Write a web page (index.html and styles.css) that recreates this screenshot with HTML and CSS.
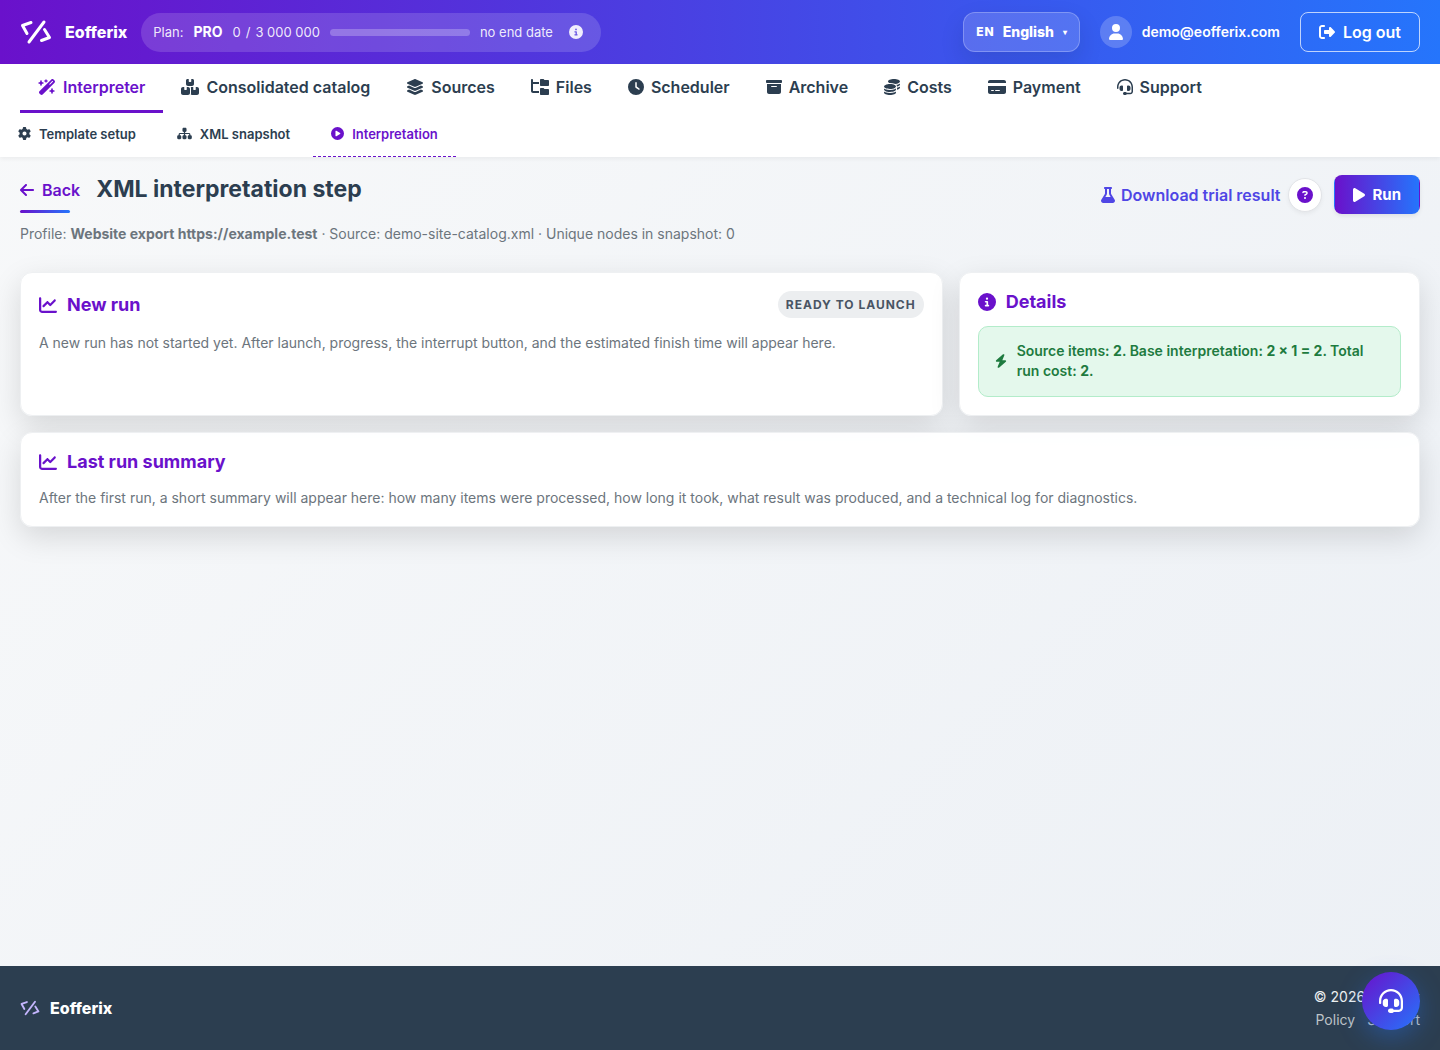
FILE: index.html
```html
<!DOCTYPE html>
<html lang="en">
<head>
	<meta charset="UTF-8">
	<meta name="viewport" content="width=device-width, initial-scale=1">
	<title>XML interpretation step - Eofferix</title>
	<link rel="stylesheet" href="styles.css">
</head>
<body>

	<!-- icons -->
	<svg class="sprite" aria-hidden="true">
		<symbol id="i-logo" viewBox="0 0 32 32"><path d="M11 6.500L2.500 9.500L7 17.500M24 6L9 26M24.500 13.500L29.500 21.500L21.500 24.500" fill="none" stroke="currentColor" stroke-width="3" stroke-linecap="round" stroke-linejoin="round"/></symbol>
		<symbol id="i-wand" viewBox="0 0 576 512"><path d="M234.7 42.7L197 56.8c-3 1.100-5 4-5 7.200s2 6.100 5 7.200l37.700 14.100L248.800 123c1.100 3 4 5 7.200 5s6.100-2 7.200-5l14.100-37.700L315 71.200c3-1.100 5-4 5-7.200s-2-6.100-5-7.200L277.300 42.700 263.200 5c-1.100-3-4-5-7.200-5s-6.100 2-7.200 5L234.700 42.700zM46.100 395.400c-18.700 18.700-18.700 49.100 0 67.900l34.600 34.600c18.700 18.700 49.100 18.700 67.900 0L529.900 116.500c18.700-18.700 18.700-49.100 0-67.900L495.300 14.100c-18.700-18.700-49.100-18.700-67.900 0L46.100 395.400zM484.600 82.600l-105 105-23.300-23.300 105-105 23.300 23.300zM7.500 117.200C3 118.900 0 123.200 0 128s3 9.100 7.500 10.800L64 160l21.200 56.500c1.700 4.500 6 7.500 10.800 7.500s9.100-3 10.800-7.500L128 160l56.500-21.200c4.500-1.700 7.500-6 7.500-10.800s-3-9.100-7.500-10.800L128 96 106.800 39.500C105.100 35 100.800 32 96 32s-9.100 3-10.800 7.500L64 96 7.500 117.200zm352 256c-4.500 1.700-7.500 6-7.500 10.800s3 9.100 7.500 10.800L416 416l21.200 56.500c1.700 4.500 6 7.500 10.800 7.500s9.100-3 10.800-7.500L480 416l56.500-21.200c4.500-1.700 7.500-6 7.500-10.800s-3-9.100-7.500-10.800L480 352l-21.200-56.500c-1.700-4.500-6-7.500-10.800-7.500s-9.100 3-10.800 7.500L416 352l-56.500 21.200z"/></symbol>
		<symbol id="i-boxes" viewBox="0 0 576 512"><path d="M248 0H208c-26.500 0-48 21.500-48 48V160c0 35.300 28.700 64 64 64H352c35.300 0 64-28.700 64-64V48c0-26.500-21.500-48-48-48H328V80c0 8.800-7.200 16-16 16H264c-8.800 0-16-7.200-16-16V0zM64 256c-35.300 0-64 28.700-64 64V448c0 35.300 28.700 64 64 64H224c35.300 0 64-28.700 64-64V320c0-35.300-28.700-64-64-64H184v80c0 8.800-7.200 16-16 16H120c-8.800 0-16-7.200-16-16V256H64zM352 512H512c35.300 0 64-28.700 64-64V320c0-35.300-28.700-64-64-64H472v80c0 8.800-7.200 16-16 16H408c-8.800 0-16-7.200-16-16V256H352c-15 0-28.800 5.100-39.700 13.800c4.900 10.400 7.700 22 7.700 34.200V464c0 12.200-2.800 23.800-7.700 34.200C323.200 506.900 337 512 352 512z"/></symbol>
		<symbol id="i-layers" viewBox="0 0 576 512"><path d="M264.5 5.200c14.900-6.900 32.100-6.900 47 0l218.600 101c8.500 3.900 13.900 12.400 13.900 21.800s-5.400 17.900-13.900 21.800l-218.600 101c-14.900 6.900-32.100 6.900-47 0L45.900 149.800C37.400 145.800 32 137.300 32 128s5.400-17.900 13.900-21.800L264.500 5.200zM476.900 209.600l53.200 24.600c8.500 3.900 13.900 12.400 13.900 21.800s-5.400 17.900-13.900 21.800l-218.600 101c-14.900 6.900-32.100 6.900-47 0L45.900 277.800C37.400 273.800 32 265.300 32 256s5.400-17.900 13.900-21.800l53.200-24.600 152 70.200c23.400 10.800 50.400 10.800 73.800 0l152-70.200zm-152 198.200l152-70.200 53.200 24.600c8.500 3.900 13.900 12.400 13.900 21.800s-5.400 17.900-13.900 21.800l-218.600 101c-14.900 6.900-32.100 6.900-47 0L45.900 405.800C37.400 401.800 32 393.300 32 384s5.400-17.900 13.900-21.800l53.200-24.600 152 70.200c23.400 10.800 50.400 10.800 73.800 0z"/></symbol>
		<symbol id="i-tree" viewBox="0 0 576 512"><path d="M64 32C64 14.300 49.700 0 32 0S0 14.300 0 32v96V384c0 35.300 28.700 64 64 64H256V384H64V160H256V96H64V32zM288 192c0 17.700 14.300 32 32 32H544c17.700 0 32-14.300 32-32V64c0-17.700-14.300-32-32-32H445.300c-8.500 0-16.600-3.400-22.600-9.400L409.400 9.400c-6-6-14.100-9.400-22.600-9.400H320c-17.700 0-32 14.300-32 32V192zm0 288c0 17.700 14.300 32 32 32H544c17.700 0 32-14.300 32-32V352c0-17.700-14.300-32-32-32H445.300c-8.500 0-16.600-3.400-22.600-9.400l-13.300-13.300c-6-6-14.100-9.400-22.600-9.400H320c-17.700 0-32 14.300-32 32V480z"/></symbol>
		<symbol id="i-clock" viewBox="0 0 512 512"><path d="M256 0a256 256 0 1 1 0 512A256 256 0 1 1 256 0zM232 120V256c0 8 4 15.500 10.700 20l96 64c11 7.400 25.900 4.400 33.300-6.700s4.400-25.900-6.700-33.300L280 243.200V120c0-13.300-10.700-24-24-24s-24 10.700-24 24z"/></symbol>
		<symbol id="i-archive" viewBox="0 0 512 512"><path d="M32 32H480c17.700 0 32 14.300 32 32V96c0 17.700-14.300 32-32 32H32C14.300 128 0 113.700 0 96V64C0 46.300 14.300 32 32 32zm0 128H480V416c0 35.300-28.700 64-64 64H96c-35.300 0-64-28.700-64-64V160zm128 80c0 8.800 7.200 16 16 16H336c8.800 0 16-7.200 16-16s-7.200-16-16-16H176c-8.800 0-16 7.200-16 16z"/></symbol>
		<symbol id="i-coins" viewBox="0 0 512 512"><path d="M512 80c0 18-14.300 34.600-38.400 48c-29.100 16.100-72.500 27.500-122.300 30.900c-3.700-1.800-7.400-3.500-11.300-5C300.600 137.400 248.200 128 192 128c-8.300 0-16.400 .2-24.500 .6l-1.100-.6C142.300 114.600 128 98 128 80c0-44.200 86-80 192-80S512 35.800 512 80zM160.700 161.100c10.200-.7 20.700-1.100 31.300-1.100c62.200 0 117.400 12.300 152.500 31.400C369.300 204.900 384 221.700 384 240c0 4-.7 7.900-2.100 11.700c-4.600 13.200-17 25.300-35 35.500c-.1 .1-.3 .1-.4 .2c-.3 .2-.6 .3-.9 .5c-35 19.400-90.800 32-153.600 32c-59.600 0-112.900-11.300-148.200-29.100c-1.900-.9-3.700-1.900-5.500-2.900C14.300 274.600 0 258 0 240c0-34.800 53.400-64.500 128-75.400c10.500-1.500 21.400-2.700 32.700-3.500zM416 240c0-21.900-10.600-39.900-24.100-53.400c28.300-4.400 54.200-11.400 76.200-20.500c16.300-6.800 31.500-15.200 43.900-25.500V176c0 19.300-16.500 37.100-43.800 50.900c-14.600 7.400-32.400 13.700-52.400 18.500c.1-1.800 .2-3.500 .2-5.300zm-32 96c0 18-14.300 34.600-38.400 48c-1.800 1-3.600 1.900-5.500 2.900C304.900 404.700 251.600 416 192 416c-62.800 0-118.600-12.600-153.600-32C14.300 370.600 0 354 0 336V300.600c12.500 10.300 27.600 18.700 43.900 25.500C83.400 342.600 135.800 352 192 352s108.600-9.400 148.100-25.900c7.800-3.200 15.300-6.900 22.400-10.900c6.100-3.400 11.800-7.200 17.200-11.200c1.500-1.100 2.900-2.300 4.300-3.400V336zm32 0V278.100c19-4.200 36.500-9.500 52.100-16c16.300-6.800 31.500-15.200 43.900-25.500V272c0 10.500-5 21-14.900 30.900c-16.300 16.300-45 29.700-81.300 38.400c.1-1.700 .2-3.500 .2-5.300zM192 448c56.200 0 108.600-9.400 148.100-25.900c16.300-6.800 31.500-15.200 43.900-25.500V432c0 44.200-86 80-192 80S0 476.200 0 432V396.600c12.500 10.300 27.600 18.700 43.900 25.500C83.400 438.600 135.800 448 192 448z"/></symbol>
		<symbol id="i-card" viewBox="0 0 576 512"><path d="M64 32C28.700 32 0 60.700 0 96v32H576V96c0-35.300-28.700-64-64-64H64zM576 224H0V416c0 35.300 28.700 64 64 64H512c35.300 0 64-28.700 64-64V224zM112 352h64c8.800 0 16 7.200 16 16s-7.200 16-16 16H112c-8.800 0-16-7.200-16-16s7.200-16 16-16zm112 16c0-8.800 7.200-16 16-16H368c8.800 0 16 7.200 16 16s-7.200 16-16 16H240c-8.800 0-16-7.200-16-16z"/></symbol>
		<symbol id="i-headset" viewBox="0 0 512 512"><path d="M256 48C141.100 48 48 141.100 48 256v40c0 13.300-10.700 24-24 24s-24-10.700-24-24V256C0 114.600 114.600 0 256 0S512 114.600 512 256V400.100c0 48.600-39.400 88-88.100 88L313.600 488c-8.300 14.300-23.800 24-41.600 24H240c-26.500 0-48-21.500-48-48s21.500-48 48-48h32c17.800 0 33.300 9.700 41.600 24l110.400 .1c22.100 0 40-17.900 40-40V256c0-114.900-93.100-208-208-208zM144 208h16c17.700 0 32 14.300 32 32V352c0 17.700-14.300 32-32 32H144c-35.300 0-64-28.700-64-64V272c0-35.300 28.700-64 64-64zm224 0c35.300 0 64 28.700 64 64v48c0 35.300-28.700 64-64 64H352c-17.700 0-32-14.300-32-32V240c0-17.700 14.300-32 32-32h16z"/></symbol>
		<symbol id="i-gear" viewBox="0 0 512 512"><path d="M495.900 166.600c3.200 8.700 .5 18.400-6.400 24.600l-43.300 39.400c1.100 8.300 1.700 16.800 1.700 25.400s-.6 17.100-1.700 25.400l43.300 39.400c6.900 6.200 9.600 15.900 6.400 24.600c-4.400 11.900-9.700 23.300-15.800 34.300l-4.700 8.100c-6.600 11-14 21.400-22.100 31.200c-5.900 7.200-15.700 9.600-24.500 6.800l-55.700-17.700c-13.400 10.300-28.200 18.900-44 25.400l-12.500 57.100c-2 9.100-9 16.300-18.200 17.800c-13.800 2.300-28 3.500-42.500 3.500s-28.700-1.200-42.500-3.500c-9.200-1.500-16.200-8.700-18.200-17.800l-12.500-57.100c-15.800-6.500-30.600-15.100-44-25.400L83.100 425.900c-8.800 2.800-18.600 .3-24.500-6.800c-8.100-9.800-15.500-20.200-22.100-31.200l-4.700-8.100c-6.100-11-11.400-22.400-15.800-34.300c-3.200-8.700-.5-18.400 6.400-24.600l43.300-39.400C64.600 273.100 64 264.600 64 256s.6-17.100 1.700-25.400L22.400 191.200c-6.900-6.200-9.600-15.900-6.400-24.600c4.400-11.900 9.700-23.300 15.800-34.300l4.700-8.100c6.600-11 14-21.400 22.100-31.200c5.900-7.200 15.700-9.600 24.500-6.800l55.700 17.700c13.400-10.300 28.200-18.900 44-25.400l12.500-57.100c2-9.100 9-16.300 18.200-17.800C227.300 1.200 241.500 0 256 0s28.700 1.200 42.500 3.500c9.200 1.500 16.200 8.700 18.200 17.800l12.500 57.100c15.800 6.500 30.600 15.100 44 25.400l55.700-17.700c8.800-2.800 18.600-.3 24.500 6.800c8.100 9.800 15.500 20.200 22.100 31.200l4.700 8.100c6.100 11 11.400 22.400 15.800 34.300zM256 336a80 80 0 1 0 0-160 80 80 0 1 0 0 160z"/></symbol>
		<symbol id="i-sitemap" viewBox="0 0 576 512"><path d="M208 80c0-26.500 21.500-48 48-48h64c26.500 0 48 21.500 48 48v64c0 26.500-21.500 48-48 48h-8v40H464c30.900 0 56 25.100 56 56v32h8c26.500 0 48 21.500 48 48v64c0 26.500-21.500 48-48 48H464c-26.500 0-48-21.500-48-48V368c0-26.500 21.500-48 48-48h8V288c0-4.400-3.600-8-8-8H312v40h8c26.500 0 48 21.500 48 48v64c0 26.500-21.500 48-48 48H256c-26.500 0-48-21.500-48-48V368c0-26.500 21.500-48 48-48h8V280H112c-4.400 0-8 3.600-8 8v32h8c26.500 0 48 21.500 48 48v64c0 26.500-21.500 48-48 48H48c-26.500 0-48-21.500-48-48V368c0-26.500 21.500-48 48-48h8V288c0-30.900 25.100-56 56-56H264V192h-8c-26.500 0-48-21.500-48-48V80z"/></symbol>
		<symbol id="i-circle-play" viewBox="0 0 512 512"><path d="M0 256a256 256 0 1 1 512 0A256 256 0 1 1 0 256zM188.300 147.100c-7.600 4.200-12.300 12.300-12.300 20.900V344c0 8.700 4.700 16.700 12.300 20.900s16.800 4.100 24.300-.5l144-88c7.100-4.400 11.500-12.100 11.500-20.500s-4.400-16.100-11.500-20.500l-144-88c-7.400-4.500-16.700-4.700-24.300-.5z"/></symbol>
		<symbol id="i-back" viewBox="0 0 448 512"><path d="M9.400 233.400c-12.500 12.500-12.500 32.800 0 45.300l160 160c12.500 12.500 32.800 12.500 45.300 0s12.500-32.800 0-45.300L109.200 288 416 288c17.700 0 32-14.300 32-32s-14.300-32-32-32l-306.700 0L214.600 118.600c12.500-12.500 12.500-32.800 0-45.300s-32.800-12.500-45.300 0l-160 160z"/></symbol>
		<symbol id="i-chart" viewBox="0 0 512 512"><path d="M64 64c0-17.700-14.300-32-32-32S0 46.300 0 64V400c0 44.200 35.800 80 80 80H480c17.700 0 32-14.300 32-32s-14.300-32-32-32H80c-8.800 0-16-7.200-16-16V64zm406.600 86.600c12.500-12.500 12.500-32.800 0-45.300s-32.800-12.500-45.300 0L320 210.700l-57.400-57.400c-12.500-12.500-32.800-12.500-45.300 0l-112 112c-12.500 12.500-12.500 32.800 0 45.300s32.800 12.500 45.300 0L240 221.300l57.400 57.400c12.500 12.500 32.800 12.500 45.300 0l128-128z"/></symbol>
		<symbol id="i-info" viewBox="0 0 512 512"><path d="M256 512A256 256 0 1 0 256 0a256 256 0 1 0 0 512zM216 336h24V272H216c-13.300 0-24-10.700-24-24s10.700-24 24-24h48c13.300 0 24 10.700 24 24v88h8c13.300 0 24 10.700 24 24s-10.700 24-24 24H216c-13.300 0-24-10.700-24-24s10.700-24 24-24zm40-208a32 32 0 1 1 0 64 32 32 0 1 1 0-64z"/></symbol>
		<symbol id="i-question" viewBox="0 0 512 512"><path d="M256 512A256 256 0 1 0 256 0a256 256 0 1 0 0 512zM169.800 165.300c7.900-22.300 29.100-37.300 52.800-37.300h58.300c34.900 0 63.100 28.300 63.100 63.100c0 22.600-12.100 43.500-31.700 54.800L280 264.400c-.2 13-10.900 23.600-24 23.600c-13.300 0-24-10.700-24-24V250.500c0-8.600 4.600-16.500 12.100-20.800l44.300-25.400c4.700-2.700 7.600-7.700 7.600-13.100c0-8.400-6.800-15.100-15.100-15.100H222.600c-3.400 0-6.400 2.100-7.500 5.300l-.4 1.200c-4.400 12.500-18.200 19-30.600 14.600s-19-18.200-14.600-30.600l.4-1.200zM224 352a32 32 0 1 1 64 0 32 32 0 1 1 -64 0z"/></symbol>
		<symbol id="i-flask" viewBox="0 0 448 512"><path d="M288 0H128C110.300 0 96 14.300 96 32s14.300 32 32 32V196.800c0 11.800-3.300 23.500-9.500 33.500L10.300 406.200C3.600 417.200 0 429.700 0 442.600C0 480.900 31.100 512 69.400 512H378.600c38.300 0 69.400-31.100 69.400-69.400c0-12.800-3.600-25.400-10.300-36.400L329.500 230.400c-6.200-10.100-9.500-21.700-9.500-33.500V64c17.700 0 32-14.300 32-32s-14.300-32-32-32H288zM192 196.800V64h64V196.800c0 23.700 6.600 46.900 19 67.100L309.500 320h-171L173 263.900c12.400-20.200 19-43.400 19-67.100z"/></symbol>
		<symbol id="i-play" viewBox="0 0 384 512"><path d="M73 39c-14.800-9.100-33.400-9.400-48.500-.9S0 62.600 0 80V432c0 17.400 9.400 33.400 24.500 41.900s33.700 8.100 48.500-.9L361 297c14.300-8.700 23-24.200 23-41s-8.700-32.200-23-41L73 39z"/></symbol>
		<symbol id="i-bolt" viewBox="0 0 448 512"><path d="M349.400 44.600c5.900-13.700 1.500-29.700-10.600-38.500s-28.600-8-39.900 1.800l-256 224c-10 8.800-13.600 22.900-8.900 35.300S50.700 288 64 288H175.500L98.600 467.400c-5.900 13.700-1.500 29.700 10.600 38.500s28.600 8 39.900-1.800l256-224c10-8.800 13.600-22.900 8.900-35.300s-16.600-20.700-30-20.700H272.500L349.400 44.600z"/></symbol>
		<symbol id="i-user" viewBox="0 0 448 512"><path d="M224 256A128 128 0 1 0 224 0a128 128 0 1 0 0 256zm-45.700 48C79.800 304 0 383.800 0 482.300C0 498.700 13.300 512 29.700 512H418.300c16.400 0 29.700-13.300 29.700-29.700C448 383.800 368.200 304 269.700 304H178.300z"/></symbol>
		<symbol id="i-logout" viewBox="0 0 512 512"><path d="M377.900 105.900L500.700 228.700c7.200 7.200 11.300 17.100 11.300 27.300s-4.100 20.100-11.300 27.300L377.900 406.100c-6.400 6.400-15 9.900-24 9.900c-18.700 0-33.900-15.200-33.900-33.900l0-62.100-128 0c-17.700 0-32-14.300-32-32l0-64c0-17.700 14.300-32 32-32l128 0 0-62.100c0-18.700 15.200-33.900 33.900-33.900c9 0 17.600 3.600 24 9.900zM160 96L96 96c-17.700 0-32 14.300-32 32l0 256c0 17.700 14.300 32 32 32l64 0c17.700 0 32 14.300 32 32s-14.300 32-32 32l-64 0c-53 0-96-43-96-96L0 128C0 75 43 32 96 32l64 0c17.700 0 32 14.300 32 32s-14.300 32-32 32z"/></symbol>
	</svg>

	<header class="topbar">
		<a class="brand" href="#">
			<svg class="brand-logo"><use href="#i-logo"/></svg>
			Eofferix
		</a>
		<div class="plan">
			<span>Plan:</span>
			<strong>PRO</strong>
			<span class="plan-usage">0<span class="slash">/</span>3 000 000</span>
			<progress class="plan-bar" value="0" max="3000000" aria-label="Plan usage"></progress>
			<span>no end date</span>
			<button class="plan-info" type="button" aria-label="Plan details"><svg class="icon"><use href="#i-info"/></svg></button>
		</div>
		<div class="topbar-right">
			<label class="lang">
				<span class="lang-code">EN</span>
				<select class="lang-select" aria-label="Language">
					<option>English</option>
				</select>
				<span class="lang-caret">▾</span>
			</label>
			<div class="user">
				<span class="avatar"><svg class="icon"><use href="#i-user"/></svg></span>
				<span>demo@eofferix.com</span>
			</div>
			<button class="logout" type="button"><svg class="icon"><use href="#i-logout"/></svg>Log out</button>
		</div>
	</header>

	<div class="menus">
		<nav class="nav" aria-label="Main">
			<a class="nav-item active" href="#"><svg class="icon icon-wide"><use href="#i-wand"/></svg>Interpreter</a>
			<a class="nav-item" href="#"><svg class="icon icon-wide"><use href="#i-boxes"/></svg>Consolidated catalog</a>
			<a class="nav-item" href="#"><svg class="icon icon-wide"><use href="#i-layers"/></svg>Sources</a>
			<a class="nav-item" href="#"><svg class="icon icon-wide"><use href="#i-tree"/></svg>Files</a>
			<a class="nav-item" href="#"><svg class="icon"><use href="#i-clock"/></svg>Scheduler</a>
			<a class="nav-item" href="#"><svg class="icon"><use href="#i-archive"/></svg>Archive</a>
			<a class="nav-item" href="#"><svg class="icon"><use href="#i-coins"/></svg>Costs</a>
			<a class="nav-item" href="#"><svg class="icon icon-wide"><use href="#i-card"/></svg>Payment</a>
			<a class="nav-item" href="#"><svg class="icon"><use href="#i-headset"/></svg>Support</a>
		</nav>
		<nav class="subnav" aria-label="Interpreter">
			<a class="subnav-item" href="#"><svg class="icon"><use href="#i-gear"/></svg>Template setup</a>
			<a class="subnav-item" href="#"><svg class="icon icon-wide"><use href="#i-sitemap"/></svg>XML snapshot</a>
			<a class="subnav-item active" href="#"><svg class="icon"><use href="#i-circle-play"/></svg>Interpretation</a>
		</nav>
	</div>

	<main class="page">
		<div class="page-head">
			<div class="page-title">
				<div class="title-row">
					<a class="back" href="#"><svg class="icon"><use href="#i-back"/></svg>Back</a>
					<h1>XML interpretation step</h1>
				</div>
				<p class="page-sub">Profile: <strong>Website export https://example.test</strong> · Source: demo-site-catalog.xml · Unique nodes in snapshot: 0</p>
			</div>
			<div class="page-actions">
				<a class="trial" href="#"><svg class="icon"><use href="#i-flask"/></svg>Download trial result</a>
				<button class="help" type="button" aria-label="Help"><svg class="icon"><use href="#i-question"/></svg></button>
				<button class="run" type="button"><svg class="icon"><use href="#i-play"/></svg>Run</button>
			</div>
		</div>

		<div class="cards">
			<section class="card">
				<div class="card-head">
					<h2><svg class="icon"><use href="#i-chart"/></svg>New run</h2>
					<span class="badge">Ready to launch</span>
				</div>
				<p>A new run has not started yet. After launch, progress, the interrupt button, and the estimated finish time will appear here.</p>
			</section>
			<section class="card">
				<h2><svg class="icon"><use href="#i-info"/></svg>Details</h2>
				<div class="notice">
					<svg class="icon"><use href="#i-bolt"/></svg>
					<div>Source items: <strong>2</strong>. Base interpretation: <strong>2 × 1 = 2</strong>. Total run cost: <strong>2</strong>.</div>
				</div>
			</section>
			<section class="card card-wide">
				<h2><svg class="icon"><use href="#i-chart"/></svg>Last run summary</h2>
				<p>After the first run, a short summary will appear here: how many items were processed, how long it took, what result was produced, and a technical log for diagnostics.</p>
			</section>
		</div>
	</main>

	<footer class="footer">
		<a class="footer-brand" href="#">
			<svg class="footer-logo"><use href="#i-logo"/></svg>
			Eofferix
		</a>
		<div class="footer-info">
			<span>© 2026 Eofferix</span>
			<div class="footer-links">
				<a href="#">Policy</a>
				<a href="#">Support</a>
			</div>
		</div>
	</footer>

	<button class="chat-button" type="button" aria-label="Support chat"><svg class="icon"><use href="#i-headset"/></svg></button>

</body>
</html>
```

FILE: styles.css
```css
:root{
	--purple: #6a11cb;
	--blue: #2575fc;
	--dark: #2c3e50;
	--muted: #6c757d;
	--gradient: linear-gradient(90deg, #6a11cb 0%, #2575fc 100%);
}
*{
	box-sizing: border-box;
	margin: 0;
	padding: 0;
}
body{
	display: flex;
	flex-direction: column;
	min-height: 100vh;
	font-family: Inter, "Liberation Sans", sans-serif;
	font-size: 14px;
	line-height: 20px;
	color: var(--dark);
	background: linear-gradient(135deg, #f8f9fa 0%, #ecf0f5 100%);
}
a{
	color: inherit;
	text-decoration: none;
}
button, select{
	font: inherit;
	color: inherit;
	background: none;
	border: 0;
	cursor: pointer;
}
.sprite{
	position: absolute;
	width: 0;
	height: 0;
}
.icon{
	width: 16px;
	height: 16px;
	flex: none;
	fill: currentColor;
}

/* top bar */
.topbar{
	display: flex;
	align-items: center;
	gap: 14px;
	height: 64px;
	padding: 0 20px;
	color: #fff;
	background: var(--gradient);
}
.brand{
	display: flex;
	align-items: center;
	gap: 13px;
	font-size: 16px;
	font-weight: 800;
}
.brand-logo{
	width: 32px;
	height: 32px;
}
.plan{
	display: flex;
	align-items: center;
	gap: 10px;
	height: 39px;
	padding: 0 18px 0 12px;
	border-radius: 20px;
	background: rgba(255, 255, 255, 0.15);
	font-size: 13px;
	color: rgba(255, 255, 255, 0.9);
}
.plan strong{
	font-size: 14px;
	color: #fff;
}
.slash{
	margin: 0 5px;
}
.plan-bar{
	appearance: none;
	width: 140px;
	height: 7px;
	border: 0;
	border-radius: 4px;
	overflow: hidden;
	background: rgba(255, 255, 255, 0.25);
}
.plan-bar::-webkit-progress-bar{
	background: transparent;
}
.plan-bar::-webkit-progress-value{
	background: #fff;
}
.plan-info{
	display: flex;
	margin-left: 6px;
}
.plan-info .icon{
	width: 14px;
	height: 14px;
}
.topbar-right{
	display: flex;
	align-items: center;
	gap: 20px;
	margin-left: auto;
}
.lang{
	display: flex;
	align-items: center;
	gap: 8px;
	height: 40px;
	padding: 0 12px;
	border: 1px solid rgba(255, 255, 255, 0.25);
	border-radius: 12px;
	background: rgba(255, 255, 255, 0.15);
	box-shadow: 0 10px 24px rgba(15, 23, 42, 0.12);
	font-weight: 800;
}
.lang-code{
	font-size: 12px;
	letter-spacing: 1px;
}
.lang-select{
	appearance: none;
	outline: 0;
}
.lang-select option{
	color: var(--dark);
}
.lang-caret{
	font-size: 8px;
}
.user{
	display: flex;
	align-items: center;
	gap: 10px;
	font-weight: 600;
}
.avatar{
	display: flex;
	align-items: center;
	justify-content: center;
	width: 32px;
	height: 32px;
	border-radius: 50%;
	background: rgba(255, 255, 255, 0.2);
}
.logout{
	display: flex;
	align-items: center;
	gap: 8px;
	height: 40px;
	padding: 0 18px;
	border: 1px solid rgba(255, 255, 255, 0.7);
	border-radius: 8px;
	font-size: 16px;
	font-weight: 600;
}

/* menus */
.menus{
	background: #fff;
	box-shadow: 0 2px 4px rgba(0, 0, 0, 0.05);
}
.nav{
	display: flex;
	padding: 0 20px;
}
.nav-item{
	display: flex;
	align-items: center;
	gap: 7px;
	height: 49px;
	padding: 0 18px;
	border-bottom: 3px solid transparent;
	font-size: 16px;
	font-weight: 600;
}
.nav-item.active{
	color: var(--purple);
	border-color: var(--purple);
}
.nav .icon-wide{
	width: 18px;
}
.subnav{
	display: flex;
	gap: 5px;
}
.subnav-item{
	display: flex;
	align-items: center;
	gap: 8px;
	height: 44px;
	padding: 0 18px 2px;
	border-bottom: 1px dashed transparent;
	font-size: 13px;
	font-weight: 600;
}
.subnav-item.active{
	color: var(--purple);
	border-color: var(--purple);
}
.subnav .icon{
	width: 13px;
	height: 13px;
}
.subnav .icon-wide{
	width: 15px;
}

/* page */
.page{
	flex: 1;
	padding: 18px 20px 24px;
}
.page-head{
	display: flex;
	justify-content: space-between;
	align-items: flex-start;
	margin-bottom: 28px;
}
.title-row{
	display: flex;
	align-items: center;
	gap: 16px;
	position: relative;
	padding-bottom: 9px;
	height: 38px;
}
.title-row::after{
	content: "";
	position: absolute;
	left: 0;
	bottom: 0;
	width: 50px;
	height: 3px;
	border-radius: 2px;
	background: var(--gradient);
}
.back{
	display: flex;
	align-items: center;
	gap: 8px;
	font-size: 16px;
	font-weight: 600;
	color: var(--purple);
}
.back .icon, .trial .icon{
	width: 14px;
}
h1{
	font-size: 23px;
	line-height: 29px;
	font-weight: 700;
}
.page-sub{
	margin-top: 11px;
	color: var(--muted);
}
.page-actions{
	display: flex;
	align-items: center;
	flex: none;
}
.trial{
	display: flex;
	align-items: center;
	gap: 6px;
	margin-right: 8px;
	font-size: 16px;
	font-weight: 600;
	color: #4f46e5;
}
.help{
	display: flex;
	align-items: center;
	justify-content: center;
	width: 34px;
	height: 34px;
	margin-right: 12px;
	border: 1px solid #e2e4e8;
	border-radius: 50%;
	background: #fff;
	box-shadow: 0 2px 4px rgba(0, 0, 0, 0.05);
	color: var(--purple);
}
.run{
	display: flex;
	align-items: center;
	gap: 7px;
	height: 39px;
	padding: 0 18px;
	border: 1px solid transparent;
	border-radius: 8px;
	background: var(--gradient);
	box-shadow: 0 2px 4px rgba(0, 0, 0, 0.08);
	font-size: 15px;
	font-weight: 700;
	color: #fff;
}
.run .icon{
	width: 12px;
}

/* cards */
.cards{
	display: grid;
	grid-template-columns: 2fr 1fr;
	gap: 16px;
}
.card{
	padding: 18px;
	border: 1px solid #eef0f2;
	border-radius: 12px;
	background: rgba(255, 255, 255, 0.95);
	box-shadow: 0 10px 30px rgba(0, 0, 0, 0.13);
}
.card-wide{
	grid-column: 1 / -1;
}
.card-head{
	display: flex;
	justify-content: space-between;
	align-items: center;
}
.card h2{
	display: flex;
	align-items: center;
	gap: 10px;
	font-size: 18px;
	line-height: 22px;
	font-weight: 700;
	color: var(--purple);
}
.card h2 .icon{
	width: 18px;
	height: 18px;
}
.card p{
	margin-top: 14px;
	line-height: 21px;
	color: var(--muted);
}
.badge{
	padding: 4px 8px 3px;
	border-radius: 14px;
	background: #eceef0;
	font-size: 12px;
	font-weight: 700;
	letter-spacing: 1px;
	text-transform: uppercase;
	color: #495464;
}
.notice{
	display: flex;
	align-items: center;
	gap: 10px;
	margin-top: 13px;
	padding: 14px 16px 15px;
	border: 1px solid #b3ecca;
	border-radius: 10px;
	background: #e4f8ec;
	font-weight: 600;
	color: #1e7b3f;
}
.notice strong{
	font-weight: 700;
}
.notice .icon{
	width: 12px;
	height: 14px;
}

/* footer */
.footer{
	display: flex;
	justify-content: space-between;
	align-items: center;
	min-height: 84px;
	padding: 18px 20px;
	color: #fff;
	background: var(--dark);
}
.footer-brand{
	display: flex;
	align-items: center;
	gap: 10px;
	font-size: 16px;
	font-weight: 800;
}
.footer-logo{
	width: 20px;
	height: 20px;
	color: #c4b5fd;
}
.footer-info{
	display: flex;
	flex-direction: column;
	align-items: flex-end;
	gap: 3px;
	color: #ecf0f1;
}
.footer-links{
	display: flex;
	gap: 12px;
	color: #bdc3c7;
}
.chat-button{
	position: fixed;
	right: 20px;
	bottom: 20px;
	display: flex;
	align-items: center;
	justify-content: center;
	width: 58px;
	height: 58px;
	border-radius: 50%;
	background: linear-gradient(135deg, #6a11cb 0%, #2575fc 100%);
	box-shadow: 0 8px 24px rgba(37, 117, 252, 0.35);
	color: #fff;
}
.chat-button .icon{
	width: 24px;
	height: 24px;
}
```
